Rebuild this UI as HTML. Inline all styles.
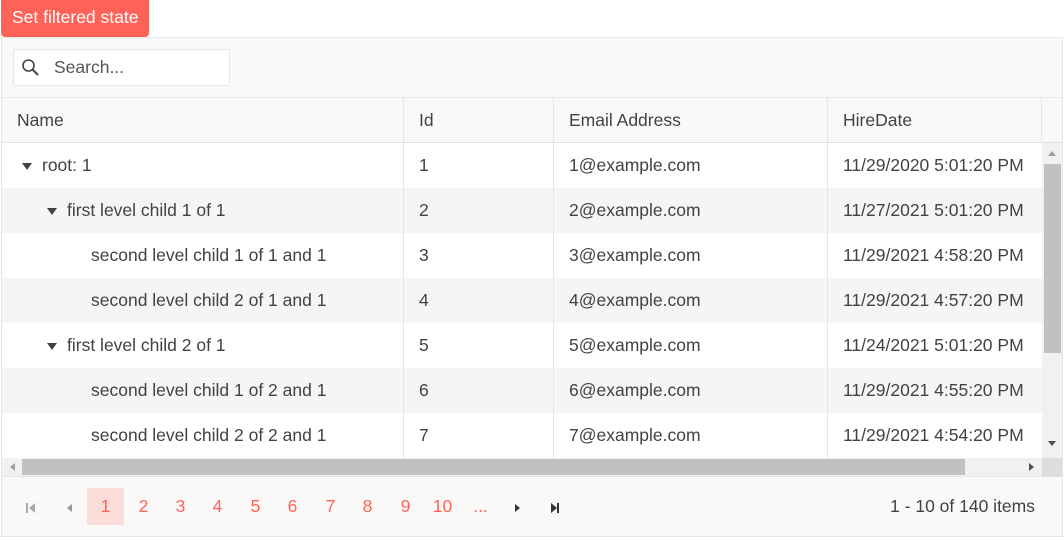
<!DOCTYPE html>
<html><head><style>
*{box-sizing:border-box;margin:0;padding:0}
body{width:1064px;height:540px;background:#fff;font-family:"Liberation Sans",sans-serif;font-size:17.5px;color:#424242;position:relative;overflow:hidden}
.abs{position:absolute}
.btn{left:1px;top:0;width:148px;height:37px;background:#ff6358;color:#fff;border-radius:0 0 4px 4px;line-height:35px;padding-left:11px}
.grid{left:1px;top:37px;width:1062px;height:500px;border:1px solid #e6e6e6;background:#faf9f8}
.search{left:11px;top:11px;width:217px;height:37px;background:#fff;border:1px solid #e6e6e6;border-radius:2px}
.hdr{left:0;top:59px;width:1060px;height:46px;border-top:1px solid #e6e6e6;border-bottom:1px solid #e0e0e0;background:#faf9f8}
.cell{position:absolute;top:0;height:100%;line-height:44px;padding-left:15px;border-left:1px solid #e6e6e6;white-space:nowrap;overflow:hidden}
.row{position:absolute;left:0;width:1040px;height:45px}
.row .cell{line-height:45px}
.tri{display:inline-block;width:0;height:0;border-left:5px solid transparent;border-right:5px solid transparent;border-top:7px solid #424242;margin-right:10px;vertical-align:1px}
.pg{position:absolute;top:450px;height:37px;width:37px;text-align:center;line-height:37px;color:#ff6358}
</style></head><body>
<div class="abs btn">Set filtered state</div>
<div class="abs grid">
 <div class="abs search">
  <svg class="abs" style="left:7px;top:8px" width="20" height="20" viewBox="0 0 20 20"><circle cx="7.5" cy="7.5" r="5.5" fill="none" stroke="#424242" stroke-width="1.6"/><path d="M11.5 11.5 L17 17" stroke="#424242" stroke-width="2"/></svg>
  <span class="abs" style="left:40px;top:7px;color:#555">Search...</span>
 </div>
 <div class="abs hdr">
  <div class="cell" style="left:0;width:401px;border-left:none">Name</div>
  <div class="cell" style="left:401px;width:150px">Id</div>
  <div class="cell" style="left:551px;width:274px">Email Address</div>
  <div class="cell" style="left:825px;width:214px">HireDate</div>
  <div class="cell" style="left:1039px;width:21px"></div>
 </div>
 <div class="abs" style="left:0;top:105px;width:1040px;height:315px;background:#fff;overflow:hidden">
  <div class="row" style="top:0;background:#fff"><div class="cell" style="left:0;width:401px;border:none;padding-left:20px"><span class="tri"></span>root: 1</div><div class="cell" style="left:401px;width:150px">1</div><div class="cell" style="left:551px;width:274px">1@example.com</div><div class="cell" style="left:825px;width:215px">11/29/2020 5:01:20 PM</div></div>
  <div class="row" style="top:45px;background:#f5f5f5"><div class="cell" style="left:0;width:401px;border:none;padding-left:45px"><span class="tri"></span>first level child 1 of 1</div><div class="cell" style="left:401px;width:150px">2</div><div class="cell" style="left:551px;width:274px">2@example.com</div><div class="cell" style="left:825px;width:215px">11/27/2021 5:01:20 PM</div></div>
  <div class="row" style="top:90px;background:#fff"><div class="cell" style="left:0;width:401px;border:none;padding-left:89px">second level child 1 of 1 and 1</div><div class="cell" style="left:401px;width:150px">3</div><div class="cell" style="left:551px;width:274px">3@example.com</div><div class="cell" style="left:825px;width:215px">11/29/2021 4:58:20 PM</div></div>
  <div class="row" style="top:135px;background:#f5f5f5"><div class="cell" style="left:0;width:401px;border:none;padding-left:89px">second level child 2 of 1 and 1</div><div class="cell" style="left:401px;width:150px">4</div><div class="cell" style="left:551px;width:274px">4@example.com</div><div class="cell" style="left:825px;width:215px">11/29/2021 4:57:20 PM</div></div>
  <div class="row" style="top:180px;background:#fff"><div class="cell" style="left:0;width:401px;border:none;padding-left:45px"><span class="tri"></span>first level child 2 of 1</div><div class="cell" style="left:401px;width:150px">5</div><div class="cell" style="left:551px;width:274px">5@example.com</div><div class="cell" style="left:825px;width:215px">11/24/2021 5:01:20 PM</div></div>
  <div class="row" style="top:225px;background:#f5f5f5"><div class="cell" style="left:0;width:401px;border:none;padding-left:89px">second level child 1 of 2 and 1</div><div class="cell" style="left:401px;width:150px">6</div><div class="cell" style="left:551px;width:274px">6@example.com</div><div class="cell" style="left:825px;width:215px">11/29/2021 4:55:20 PM</div></div>
  <div class="row" style="top:270px;background:#fff"><div class="cell" style="left:0;width:401px;border:none;padding-left:89px">second level child 2 of 2 and 1</div><div class="cell" style="left:401px;width:150px">7</div><div class="cell" style="left:551px;width:274px">7@example.com</div><div class="cell" style="left:825px;width:215px">11/29/2021 4:54:20 PM</div></div>
 </div>
 <div class="abs" style="left:1040px;top:105px;width:20px;height:315px;background:#f1f1f1"></div>
 <div class="abs" style="left:1042px;top:126px;width:17px;height:189px;background:#c1c1c1"></div>
 <div class="abs" style="left:1046px;top:113px;width:0;height:0;border-left:4px solid transparent;border-right:4px solid transparent;border-bottom:5px solid #a39e96"></div>
 <div class="abs" style="left:1046px;top:403px;width:0;height:0;border-left:4px solid transparent;border-right:4px solid transparent;border-top:5px solid #505050"></div>
 <div class="abs" style="left:0;top:420px;width:1040px;height:19px;background:#f1f1f1;border-bottom:1px solid #e6e6e6"></div>
 <div class="abs" style="left:20px;top:421px;width:943px;height:16px;background:#c1c1c1"></div>
 <div class="abs" style="left:8px;top:425px;width:0;height:0;border-top:4px solid transparent;border-bottom:4px solid transparent;border-right:5px solid #a39e96"></div>
 <div class="abs" style="left:1027px;top:425px;width:0;height:0;border-top:4px solid transparent;border-bottom:4px solid transparent;border-left:5px solid #505050"></div>
 <div class="abs" style="left:1040px;top:420px;width:20px;height:19px;background:#ddd"></div>
 <svg class="abs" style="left:23px;top:464px" width="12" height="12"><rect x="1" y="1" width="2" height="10" fill="#aaa"/><path d="M10 1 L4 6 L10 11Z" fill="#aaa"/></svg>
 <svg class="abs" style="left:62px;top:464px" width="12" height="12"><path d="M8 2 L3 6 L8 10Z" fill="#999"/></svg>
 <div class="pg" style="left:85px;background:#fadcd9">1</div>
 <div class="pg" style="left:123px">2</div><div class="pg" style="left:160px">3</div><div class="pg" style="left:197px">4</div><div class="pg" style="left:235px">5</div><div class="pg" style="left:272px">6</div><div class="pg" style="left:310px">7</div><div class="pg" style="left:347px">8</div><div class="pg" style="left:385px">9</div><div class="pg" style="left:422px">10</div><div class="pg" style="left:460px">...</div>
 <svg class="abs" style="left:510px;top:464px" width="12" height="12"><path d="M3 2 L8 6 L3 10Z" fill="#333"/></svg>
 <svg class="abs" style="left:547px;top:464px" width="12" height="12"><path d="M2 1 L8 6 L2 11Z" fill="#333"/><rect x="8" y="1" width="2" height="10" fill="#333"/></svg>
 <div class="abs" style="right:27px;top:458px">1 - 10 of 140 items</div>
</div>
</body></html>
